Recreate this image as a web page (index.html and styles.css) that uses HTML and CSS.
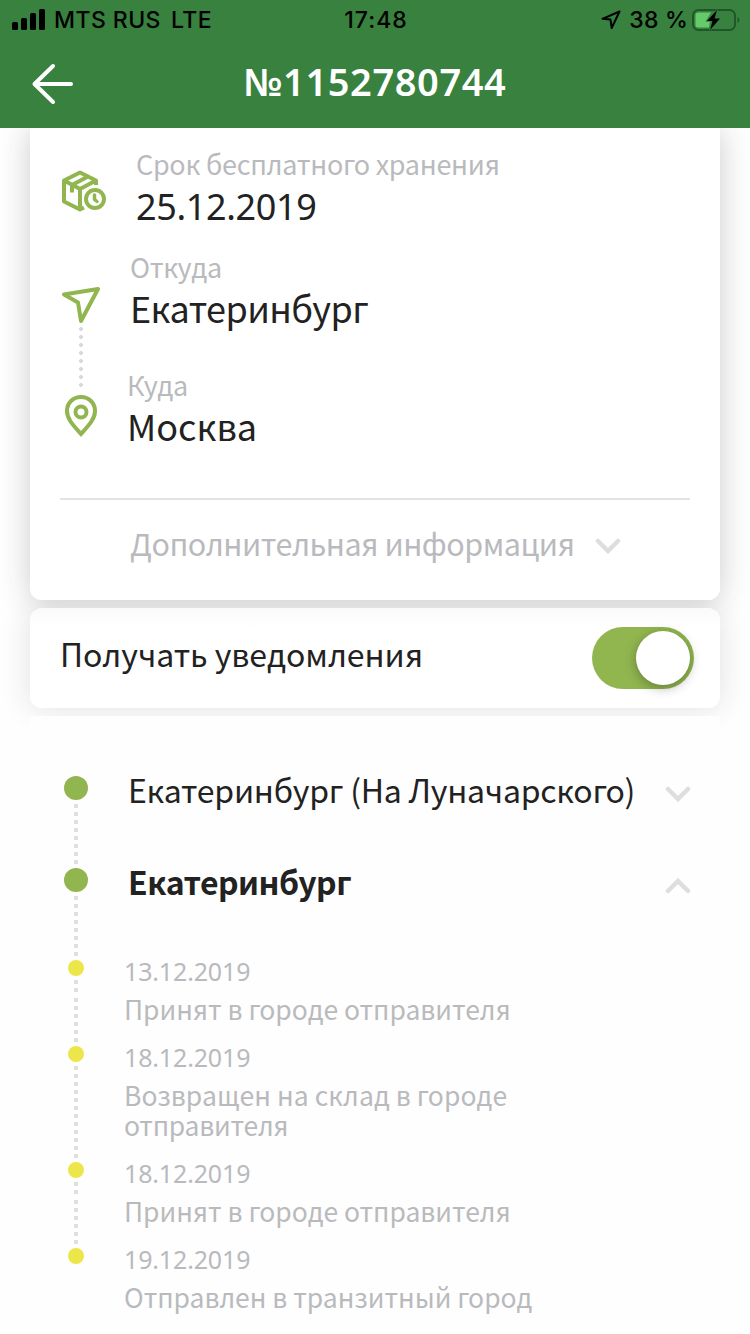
FILE: index.html
```html
<!DOCTYPE html>
<html lang="ru">
<head>
<meta charset="utf-8">
<title>№1152780744</title>
<link rel="stylesheet" href="styles.css">
</head>
<body>
<header class="header">
  <div class="status">
    <div class="status-left">
      <svg width="34" height="22" viewBox="0 0 34 22"><rect x="0" y="13" width="6" height="8" rx="1.5"/><rect x="9" y="9" width="6" height="12" rx="1.5"/><rect x="18" y="4" width="6" height="17" rx="1.5"/><rect x="27" y="0" width="6" height="21" rx="1.5"/></svg>
      <span class="carrier">MTS RUS</span><span class="network">LTE</span>
    </div>
    <div class="clock">17:48</div>
    <div class="status-right">
      <svg width="20" height="20" viewBox="0 0 20 20" fill="none" stroke="#000" stroke-width="2" stroke-linejoin="round"><path d="M18.5 1.5 L1.5 8.8 L9.5 9.6 L10.7 18 Z"/></svg>
      <span class="percent">38 %</span>
      <svg class="battery" width="48" height="24" viewBox="0 0 48 24"><rect x="1" y="2" width="42" height="20" rx="5.5" fill="none" stroke="#21552a" stroke-width="2"/><path d="M45.5 9v6q2-1 2-3t-2-3z" fill="#21552a"/><path d="M6 4.500H19L14 13H18L17 19.500H6Q3.500 19.500 3.500 17V7Q3.500 4.500 6 4.500Z" fill="#65ca68"/><path d="M25 2L15 13H20.500L18 22L28 10.500H22.500Z" fill="#000" stroke="#38813f" stroke-width="1.500" paint-order="stroke"/></svg>
    </div>
  </div>
  <div class="navbar">
    <svg class="back" width="44" height="44" viewBox="0 0 44 44" fill="none" stroke="#fff" stroke-width="4" stroke-linecap="round" stroke-linejoin="round"><path d="M23 4L4.500 22L23 40M4.500 22H41"/></svg>
    <h1 class="title">№1152780744</h1>
  </div>
</header>
<main class="content">
  <section class="card info">
    <div class="info-row storage">
      <svg class="icon" width="46" height="44" viewBox="0 0 46 44" fill="none" stroke="#91b64f" stroke-width="4" stroke-linejoin="round"><path d="M34 15V10.500L18 2.500L2 10.500V31.500L18 39.500L22 37.500M2 10.500L18 19L34 10.500M18 19V39M10 15L26 6.500M10 15V22.500"/><circle cx="33" cy="29" r="11.800" fill="#fff" stroke="none"/><circle cx="33" cy="29" r="9" stroke-width="4"/><path d="M32.500 25V29.500L35 31.500" stroke-width="3.500" stroke-linecap="round"/></svg>
      <div><div class="label">Срок бесплатного хранения</div><div class="value date">25.12.2019</div></div>
    </div>
    <div class="info-row from">
      <svg class="icon" width="40" height="38" viewBox="0 0 40 38" fill="none" stroke="#91b64f" stroke-width="4" stroke-linejoin="round"><path d="M36 3L2 8.500L16 16.500L19 35Z"/></svg>
      <div><div class="label">Откуда</div><div class="value">Екатеринбург</div></div>
      <div class="route-dots"></div>
    </div>
    <div class="info-row to">
      <svg class="icon" width="32" height="42" viewBox="0 0 32 42" fill="none" stroke="#91b64f" stroke-width="4"><path d="M16 2C8 2 2 8 2 16C2 24 8 30 16 39C24 30 30 24 30 16C30 8 24 2 16 2Z"/><circle cx="16" cy="17" r="5.500"/></svg>
      <div><div class="label">Куда</div><div class="value">Москва</div></div>
    </div>
    <div class="more"><span class="more-text">Дополнительная информация</span><svg class="chev" width="26" height="16" viewBox="0 0 26 16"><path d="M3 3L13 13L23 3"/></svg></div>
  </section>
  <section class="card notify">
    <span class="notify-text">Получать уведомления</span>
    <span class="switch"><span class="knob"></span></span>
  </section>
  <section class="timeline">
    <div class="stop"><div class="rail"><i class="dot"></i><i class="line"></i></div><div class="city"><span class="city-name">Екатеринбург (На Луначарского)</span><svg class="chev" width="26" height="16" viewBox="0 0 26 16"><path d="M3 3L13 13L23 3"/></svg></div></div>
    <div class="stop"><div class="rail"><i class="dot"></i><i class="line"></i></div><div class="city"><span class="city-name current">Екатеринбург</span><svg class="chev" width="26" height="16" viewBox="0 0 26 16"><path d="M3 13L13 3L23 13"/></svg></div></div>
    <div class="stop event"><div class="rail"><i class="dot"></i><i class="line short"></i><i class="line"></i></div><div class="detail"><div class="day">13.12.2019</div><div class="text">Принят в городе отправителя</div></div></div>
    <div class="stop event"><div class="rail"><i class="dot"></i><i class="line"></i></div><div class="detail"><div class="day">18.12.2019</div><div class="text"><span class="lead">Возвращен на склад в городе</span> <span class="tail">отправителя</span></div></div></div>
    <div class="stop event"><div class="rail"><i class="dot"></i><i class="line short"></i><i class="line"></i></div><div class="detail"><div class="day">18.12.2019</div><div class="text">Принят в городе отправителя</div></div></div>
    <div class="stop event"><div class="rail"><i class="dot"></i></div><div class="detail"><div class="day">19.12.2019</div><div class="text">Отправлен в транзитный город</div></div></div>
  </section>
</main>
</body>
</html>
```
FILE: styles.css
```css
* { box-sizing: border-box; }
body { margin: 0; width: 750px; height: 1334px; overflow: hidden; background: #fefefe; color: #222; font-family: "Noto Sans CJK SC", "Noto Sans", sans-serif; }
svg { display: block; flex: none; }
.header { position: relative; z-index: 3; height: 128px; background: #38813f; }
.status { display: grid; grid-template-columns: 1fr auto 1fr; height: 40px; align-items: center; padding: 0 10px 0 12px; font: 450 23px/40px Inter, sans-serif; color: #000; }
.status-left { display: flex; align-items: center; gap: 8px; }
.carrier { letter-spacing: 0.45px; }
.network { margin-left: 2px; letter-spacing: 0.5px; }
.clock { letter-spacing: 1px; }
.status-right { display: flex; align-items: center; justify-content: flex-end; gap: 8px; }
.percent { letter-spacing: 0.2px; }
.battery { margin-left: -4px; }
.navbar { display: grid; grid-template-columns: 112px 1fr 112px; height: 88px; align-items: center; }
.back { margin-left: 30px; }
.title { margin: -7px 0 0; text-align: center; color: #fff; font-family: "Noto Sans", sans-serif; font-size: 38px; line-height: 60px; font-weight: 600; letter-spacing: 0.6px; }
.content { position: relative; z-index: 0; padding: 0 30px; }
.card { position: relative; background: #fff; }
.card::before { content: ""; position: absolute; inset: 0; z-index: -1; border-radius: 12px; }
.info { height: 472px; border-radius: 0 0 12px 12px; padding: 16px 30px 0; }
.info::before { box-shadow: 0 0 30px rgba(40, 40, 55, 0.24); }
.info-row { display: grid; grid-template-columns: 76px 1fr; position: relative; }
.storage { height: 103px; }
.from { height: 118px; grid-template-columns: 70px 1fr; }
.to { height: 133px; grid-template-columns: 67px 1fr; }
.storage .icon { margin: 26px 0 0 2px; }
.from .icon { margin: 39px 0 0 2px; }
.to .icon { margin: 30px 0 0 5px; }
.label { margin-top: -1px; font-size: 27px; line-height: 42px; letter-spacing: -0.3px; color: #b9babd; }
.value { margin-top: -2px; font-size: 36px; line-height: 42px; }
.date { margin-top: 1px; font-family: "Noto Sans", sans-serif; letter-spacing: -0.35px; }
.from .value { letter-spacing: -0.6px; }
.route-dots { position: absolute; left: 19px; top: 80px; width: 4px; height: 60px; background: radial-gradient(circle at 2px 2px, #d9d9dc 1.700px, transparent 2.200px) 0 0 / 4px 8px; }
.more { border-top: 2px solid #e3e3e4; display: flex; align-items: center; height: 92px; padding-left: 70px; gap: 20px; color: #b9babd; }
.more-text { margin-top: -4px; font-size: 30.5px; line-height: 44px; letter-spacing: -0.5px; }
.chev { fill: none; stroke: #dedee0; stroke-width: 4.500; stroke-linecap: round; stroke-linejoin: miter; }
.more .chev { margin-top: 2px; }
.notify { margin-top: 8px; height: 100px; border-radius: 12px; background: linear-gradient(#fafafa, #fff 20px); padding: 0 26px 0 30px; display: flex; align-items: center; justify-content: space-between; }
.notify::before { box-shadow: 0 0 30px rgba(40, 40, 55, 0.14); }
.notify-text { margin-top: -10px; font-size: 32px; line-height: 44px; letter-spacing: -0.05px; }
.switch { display: flex; justify-content: flex-end; width: 102px; height: 62px; border-radius: 31px; background: #91b64f; padding: 4px; }
.knob { width: 54px; height: 54px; border-radius: 50%; background: #fff; box-shadow: 0 3px 12px rgba(0, 0, 0, 0.3); }
.timeline { position: relative; background: #fefefe; margin-top: 8px; padding: 60px 29px 0 34px; height: 630px; }
.stop { display: grid; grid-template-columns: 24px 1fr; column-gap: 40px; min-height: 92px; }
.rail { display: flex; flex-direction: column; align-items: center; }
.dot { width: 24px; height: 24px; border-radius: 50%; background: #91b64f; }
.line { width: 4px; flex: 1; margin: 4px 0; background: linear-gradient(#dfdfe1 4px, transparent 4px) 0 0 / 4px 8px; }
.line.short { flex: none; height: 14px; margin-bottom: 0; }
.city { display: flex; justify-content: space-between; align-items: flex-start; }
.city .chev { margin-top: 10px; }
.city-name { margin-top: -2px; font-size: 32px; line-height: 30px; letter-spacing: -0.24px; }
.current { font-weight: 700; letter-spacing: -0.5px; }
.event { column-gap: 36px; min-height: 86px; }
.event .dot { width: 16px; height: 16px; background: #ece64a; }
.detail { color: #b9babd; padding-bottom: 22px; }
.day { font-family: "Noto Sans", sans-serif; font-size: 25px; line-height: 38px; margin-top: -8px; letter-spacing: -0.15px; }
.text { font-size: 26.5px; line-height: 30px; padding-top: 4px; letter-spacing: -0.03px; }
.lead { letter-spacing: 0.08px; }
.tail { display: block; letter-spacing: -0.25px; }
```
